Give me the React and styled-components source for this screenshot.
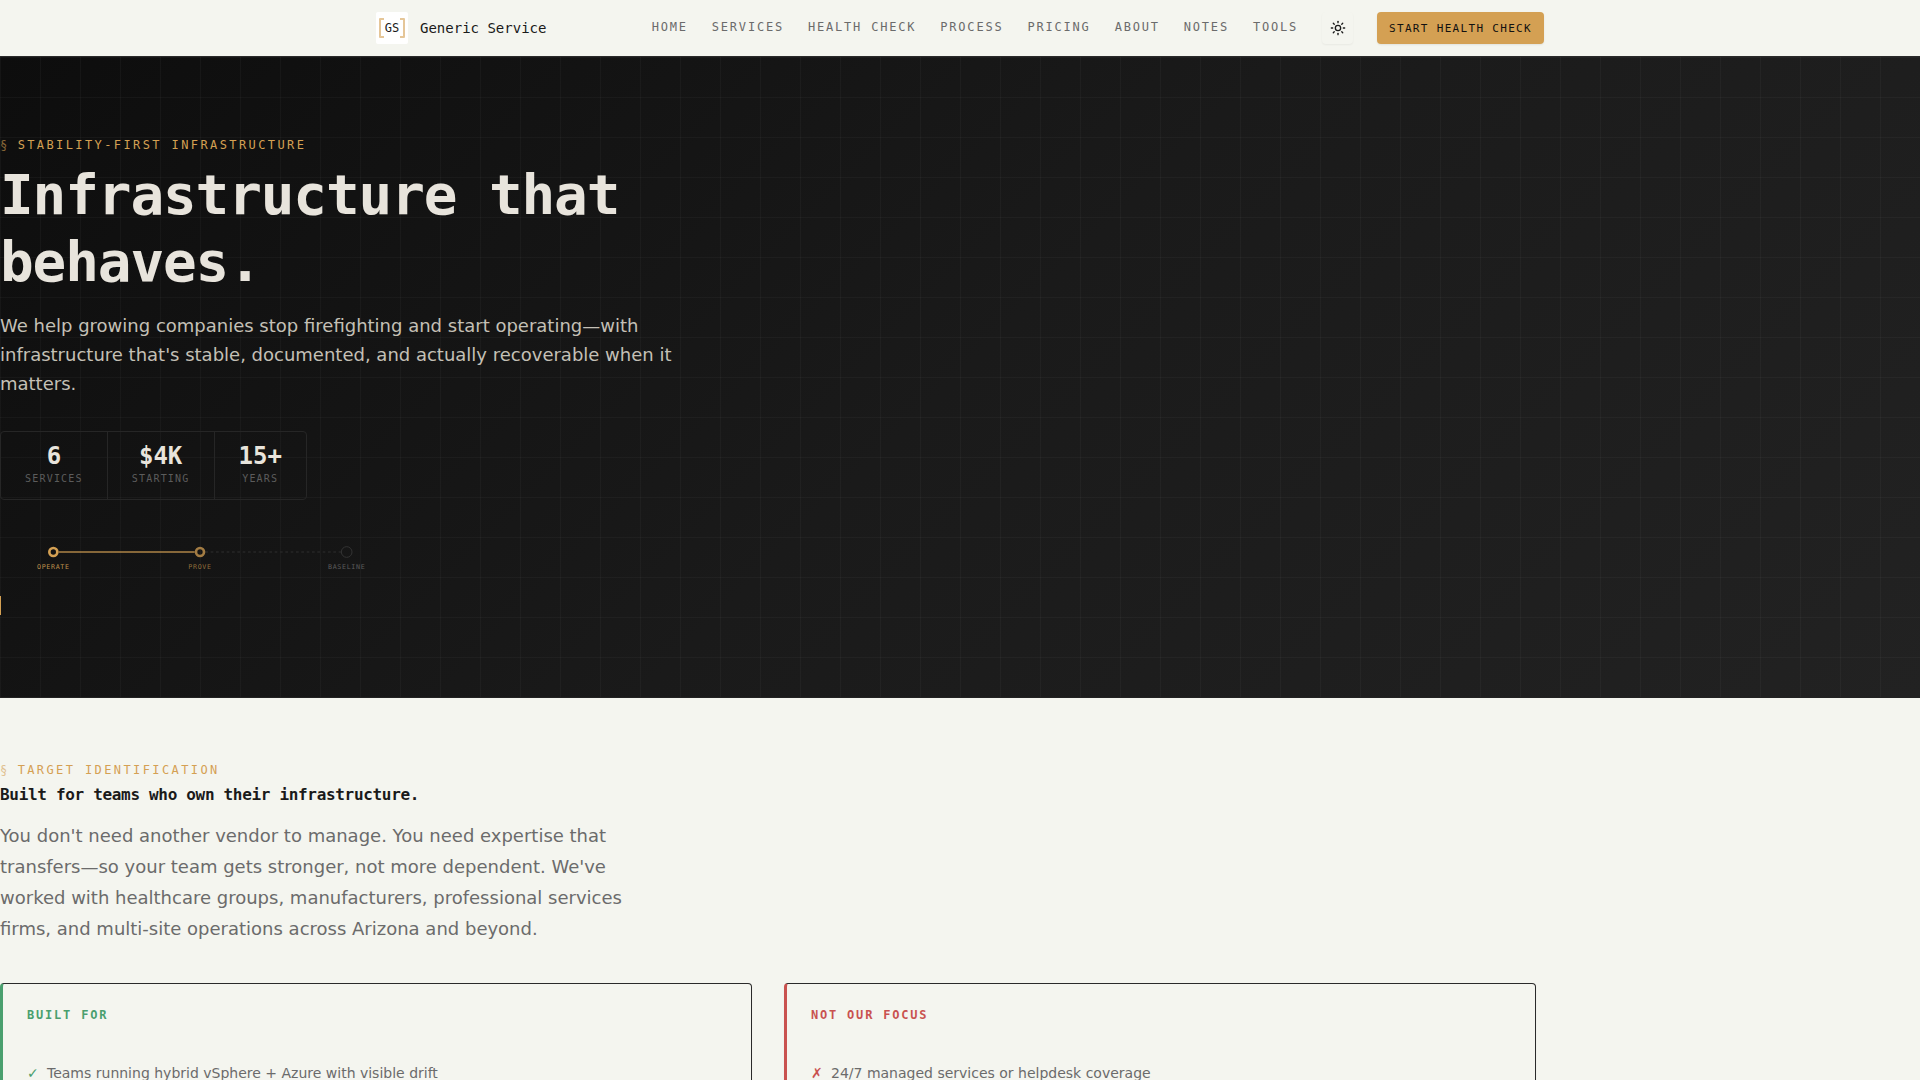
import styled, { createGlobalStyle } from "styled-components";
import { Sun } from "lucide-react";

const mono = `"DejaVu Sans Mono", monospace`;
const sans = `"DejaVu Sans", sans-serif`;

const GlobalStyle = createGlobalStyle`
  * {
    box-sizing: border-box;
    margin: 0;
    padding: 0;
  }
  body {
    background-color: #f4f5ef;
    color: #1a1a1a;
    font-family: ${sans};
  }
`;

const Header = styled.header`
  background-color: #f4f5ef;
  border-bottom: 1px solid #2a2a2a;
`;

const HeaderInner = styled.div`
  display: flex;
  align-items: center;
  justify-content: space-between;
  max-width: 1200px;
  min-height: 56px;
  margin: 0 auto;
  padding: 0 16px;
`;

const Brand = styled.a`
  display: flex;
  align-items: center;
  gap: 12px;
  color: #1a1a1a;
  font-family: ${mono};
  font-size: 14px;
  text-decoration: none;
`;

const Nav = styled.nav`
  display: flex;
  align-items: center;
  gap: 24px;
`;

const NavLink = styled.a`
  padding-bottom: 2px;
  color: #6b6b6b;
  font-family: ${mono};
  font-size: 12px;
  letter-spacing: 0.15em;
  text-transform: uppercase;
  text-decoration: none;
`;

const ThemeButton = styled.button`
  display: flex;
  align-items: center;
  justify-content: center;
  width: 31px;
  height: 32px;
  border: none;
  border-radius: 4px;
  background-color: #f4f5ef;
  color: #1a1a1a;
  box-shadow: 0 1px 2px rgba(0, 0, 0, 0.05);
  cursor: pointer;
`;

const CtaLink = styled.a`
  display: flex;
  align-items: center;
  height: 32px;
  padding: 0 12px;
  border-radius: 4px;
  background-color: #d4a053;
  color: #111111;
  box-shadow: 0 1px 2px rgba(0, 0, 0, 0.08);
  font-family: ${mono};
  font-size: 11px;
  letter-spacing: 0.12em;
  text-transform: uppercase;
  text-decoration: none;
`;

const Hero = styled.section`
  padding: 80px 0 82px;
  border-bottom: 1px solid #222222;
  background-image: linear-gradient(rgba(255, 255, 255, 0.03) 1px, transparent 1px),
    linear-gradient(90deg, rgba(255, 255, 255, 0.03) 1px, transparent 1px),
    linear-gradient(135deg, #0d0d0d 0%, #1a1a1a 50%, #222222 100%);
  background-size: 40px 40px, 40px 40px, 100% 100%;
`;

const Container = styled.div`
  max-width: 1536px;
`;

const Eyebrow = styled.p`
  display: flex;
  gap: 8px;
  margin-bottom: 8px;
  color: #d4a053;
  font-family: ${mono};
  font-size: 12px;
  line-height: 16px;
  letter-spacing: 0.2em;
  text-transform: uppercase;

  &::before {
    content: "§";
    opacity: 0.6;
  }
`;

const HeroTitle = styled.h1`
  max-width: 700px;
  margin-bottom: 16px;
  color: #e8e4dc;
  font-family: ${mono};
  font-size: 56px;
  font-weight: 700;
  line-height: 67px;
  letter-spacing: -0.02em;
`;

const HeroText = styled.p`
  max-width: 700px;
  margin-bottom: 33px;
  color: #c4c0b6;
  font-size: 18px;
  line-height: 29px;
`;

const Stats = styled.dl`
  display: flex;
  width: fit-content;
  margin-bottom: 32px;
  border: 1px solid #262626;
  border-radius: 4px;
`;

const Stat = styled.div`
  display: flex;
  flex-direction: column-reverse;
  align-items: center;
  gap: 3px;
  padding: 10px 24px 14px;

  & + & {
    border-left: 1px solid #262626;
  }
`;

const StatLabel = styled.dt`
  color: #5c5c5c;
  font-family: ${mono};
  font-size: 10px;
  line-height: 12px;
  letter-spacing: 0.12em;
  text-transform: uppercase;
`;

const StatValue = styled.dd`
  color: #e8e4dc;
  font-family: ${mono};
  font-size: 24px;
  font-weight: 700;
  line-height: 28px;
`;

const Timeline = styled.svg`
  display: block;
  width: 400px;
  height: 64px;
  font-family: ${mono};
  font-size: 5px;
  letter-spacing: 0.1em;
  text-anchor: middle;
`;

const Cursor = styled.div`
  width: 1px;
  height: 19px;
  background-color: #d4a053;
`;

const Section = styled.section`
  padding: 64px 0;
`;

const SectionTitle = styled.h2`
  margin-bottom: 16px;
  font-family: ${mono};
  font-size: 16px;
  font-weight: 700;
  line-height: 18px;
  letter-spacing: -0.02em;
`;

const SectionText = styled.p`
  max-width: 640px;
  margin-bottom: 39px;
  color: #6b6b6b;
  font-size: 18px;
  line-height: 31px;
`;

const Columns = styled.div`
  display: grid;
  grid-template-columns: repeat(2, 1fr);
  gap: 32px;
`;

const Card = styled.article`
  padding: 24px;
  border: 1px solid #2a2a2a;
  border-left: 3px solid ${(props) => props.$accent};
  border-radius: 4px;
  box-shadow: 0 1px 2px rgba(0, 0, 0, 0.06);
`;

const CardTitle = styled.h3`
  margin-bottom: 40px;
  color: ${(props) => props.$accent};
  font-family: ${mono};
  font-size: 12px;
  font-weight: 700;
  line-height: 14px;
  letter-spacing: 0.15em;
  text-transform: uppercase;
`;

const CardList = styled.ul`
  list-style: none;
`;

const CardItem = styled.li`
  display: flex;
  gap: 8px;
  color: #6b6b6b;
  font-size: 14px;
  line-height: 22px;

  &::before {
    content: "${(props) => props.$mark}";
    width: 12px;
    color: ${(props) => props.$accent};
  }
`;

const links = ["Home", "Services", "Health Check", "Process", "Pricing", "About", "Notes", "Tools"];

const stats = [
  { value: "6", label: "Services" },
  { value: "$4K", label: "Starting" },
  { value: "15+", label: "Years" },
];

const cards = [
  {
    title: "Built for",
    accent: "#4a9f6e",
    mark: "✓",
    items: ["Teams running hybrid vSphere + Azure with visible drift"],
  },
  {
    title: "Not our focus",
    accent: "#c9524f",
    mark: "✗",
    items: ["24/7 managed services or helpdesk coverage"],
  },
];

const Logo = () => (
  <svg width="32" height="32" viewBox="0 0 32 32" aria-hidden="true">
    <rect width="32" height="32" rx="2" fill="#ffffff" />
    <path
      d="M8 7H4v18h4M24 7h4v18h-4"
      fill="none"
      stroke="#d4a053"
      strokeLinejoin="round"
      strokeOpacity="0.6"
      strokeWidth="2"
    />
    <text x="16" y="20" fill="#1a1a1a" fontSize="12" textAnchor="middle">
      GS
    </text>
  </svg>
);

const StageTimeline = () => (
  <Timeline viewBox="0 0 300 48" role="img" aria-label="Operate, prove, baseline">
    <line x1="44" y1="15" x2="146" y2="15" stroke="#d4a053" strokeOpacity="0.6" strokeWidth="1.5" />
    <line x1="154" y1="15" x2="256" y2="15" stroke="#262626" strokeDasharray="2 2" />
    <circle cx="40" cy="15" r="3" fill="none" stroke="#d4a053" strokeWidth="2" />
    <circle cx="150" cy="15" r="3" fill="none" stroke="#a37c43" strokeWidth="2" />
    <circle cx="260" cy="15" r="4" fill="none" stroke="#333333" strokeWidth="0.75" />
    <text x="40" y="28" fill="#d4a053" fillOpacity="0.9">OPERATE</text>
    <text x="150" y="28" fill="#d4a053" fillOpacity="0.65">PROVE</text>
    <text x="260" y="28" fill="#5c5c5c">BASELINE</text>
  </Timeline>
);

const App = () => {
  return (
    <>
      <GlobalStyle />
      <Header>
        <HeaderInner>
          <Brand href="#home">
            <Logo />
            Generic Service
          </Brand>
          <Nav>
            {links.map((link) => (
              <NavLink key={link} href={`#${link.toLowerCase().replace(" ", "-")}`}>
                {link}
              </NavLink>
            ))}
            <ThemeButton type="button" aria-label="Toggle theme">
              <Sun size={16} />
            </ThemeButton>
            <CtaLink href="#start">Start Health Check</CtaLink>
          </Nav>
        </HeaderInner>
      </Header>
      <main>
        <Hero>
          <Container>
            <Eyebrow>Stability-First Infrastructure</Eyebrow>
            <HeroTitle>Infrastructure that behaves.</HeroTitle>
            <HeroText>
              We help growing companies stop firefighting and start operating—with
              infrastructure that's stable, documented, and actually recoverable when it
              matters.
            </HeroText>
            <Stats>
              {stats.map((stat) => (
                <Stat key={stat.label}>
                  <StatLabel>{stat.label}</StatLabel>
                  <StatValue>{stat.value}</StatValue>
                </Stat>
              ))}
            </Stats>
            <StageTimeline />
            <Cursor />
          </Container>
        </Hero>
        <Section>
          <Container>
            <Eyebrow>Target Identification</Eyebrow>
            <SectionTitle>Built for teams who own their infrastructure.</SectionTitle>
            <SectionText>
              You don't need another vendor to manage. You need expertise that transfers—so
              your team gets stronger, not more dependent. We've worked with healthcare
              groups, manufacturers, professional services firms, and multi-site operations
              across Arizona and beyond.
            </SectionText>
            <Columns>
              {cards.map((card) => (
                <Card key={card.title} $accent={card.accent}>
                  <CardTitle $accent={card.accent}>{card.title}</CardTitle>
                  <CardList>
                    {card.items.map((item) => (
                      <CardItem key={item} $accent={card.accent} $mark={card.mark}>
                        {item}
                      </CardItem>
                    ))}
                  </CardList>
                </Card>
              ))}
            </Columns>
          </Container>
        </Section>
      </main>
    </>
  );
};

export default App;
